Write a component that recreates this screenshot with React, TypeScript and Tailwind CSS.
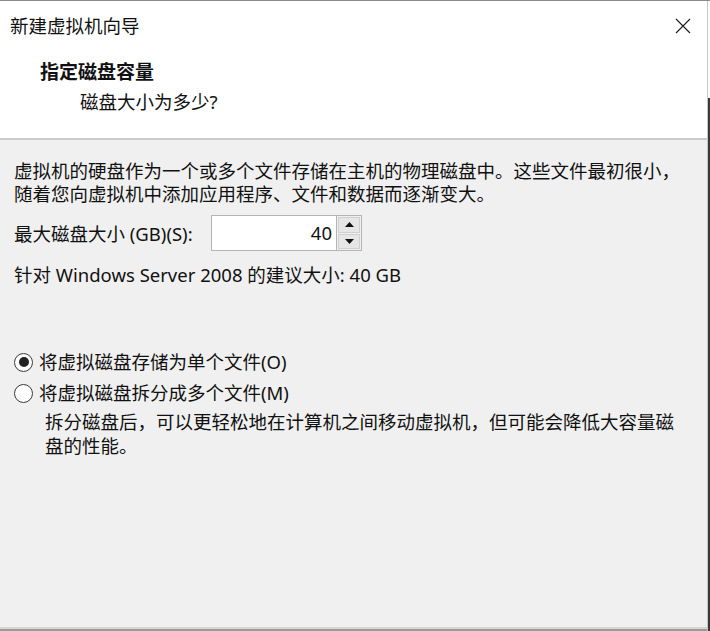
import React from 'react';

const font = { fontFamily: '"Segoe UI", "Noto Sans", "Noto Sans CJK SC", sans-serif' };

const CloseIcon = () => (
  <svg width="16" height="16" viewBox="0 0 16 16" className="block">
    <path d="M1 1 L15 15 M15 1 L1 15" stroke="#1a1a1a" strokeWidth="1.1" fill="none" />
  </svg>
);

const Radio: React.FC<{ checked?: boolean }> = ({ checked }) => (
  <span className="flex h-[19px] w-[19px] shrink-0 items-center justify-center rounded-full border-[1.5px] border-[#3a3a3a] bg-white">
    {checked && <span className="h-[10px] w-[10px] rounded-full bg-[#222]" />}
  </span>
);

const Spinner = () => (
  <div className="flex h-[36px] w-[25px] flex-col border border-l-0 border-[#b4b4b4] bg-[#f0f0f0] p-[1px]">
    <button className="flex flex-1 items-center justify-center border border-[#cfcfcf] bg-[#e6e6e6]">
      <svg width="9" height="5" viewBox="0 0 9 5">
        <path d="M0 5 L4.5 0 L9 5 Z" fill="#111" />
      </svg>
    </button>
    <button className="mt-[1px] flex flex-1 items-center justify-center border border-[#cfcfcf] bg-[#e6e6e6]">
      <svg width="9" height="5" viewBox="0 0 9 5">
        <path d="M0 0 L9 0 L4.5 5 Z" fill="#111" />
      </svg>
    </button>
  </div>
);

export default function App() {
  return (
    <div
      className="relative flex h-[631px] w-[710px] flex-col overflow-hidden border-t border-[#8a8a8a] bg-white text-[18.5px] text-[#111]"
      style={font}
    >
      {/* header */}
      <div className="flex h-[50px] items-center justify-between pl-[10px] pr-[19px]">
        <span className="leading-[22px]">新建虚拟机向导</span>
        <CloseIcon />
      </div>
      <div className="mt-[9px] pl-[40px] text-[19px] font-bold leading-[24px]">指定磁盘容量</div>
      <div className="mt-[6px] pl-[80px] leading-[24px]">磁盘大小为多少?</div>
      <div className="mt-[24px] h-[2px] bg-[#cacaca]" />

      {/* body */}
      <div className="flex flex-1 flex-col bg-[#f0f0f0] px-[14px] pt-[19px]">
        <p className="whitespace-nowrap leading-[23px]">
          虚拟机的硬盘作为一个或多个文件存储在主机的物理磁盘中。这些文件最初很小，
          <br />
          随着您向虚拟机中添加应用程序、文件和数据而逐渐变大。
        </p>

        <div className="mt-[10px] flex h-[36px] items-center">
          <span className="w-[197px] whitespace-nowrap leading-[21px]">最大磁盘大小 (GB)(S):</span>
          <div className="flex h-[36px] w-[126px] items-center justify-end border border-[#b4b4b4] bg-white pr-[4px]">
            40
          </div>
          <Spinner />
        </div>

        <div className="mt-[13px] whitespace-nowrap leading-[21px]">
          针对 Windows Server 2008 的建议大小: 40 GB
        </div>

        <div className="mt-[65px] flex h-[24px] items-center gap-[6px]">
          <Radio checked />
          <span className="whitespace-nowrap">将虚拟磁盘存储为单个文件(O)</span>
        </div>
        <div className="mt-[7px] flex h-[24px] items-center gap-[6px]">
          <Radio />
          <span className="whitespace-nowrap">将虚拟磁盘拆分成多个文件(M)</span>
        </div>
        <p className="mt-[5px] whitespace-nowrap pl-[31px] leading-[24px]">
          拆分磁盘后，可以更轻松地在计算机之间移动虚拟机，但可能会降低大容量磁
          <br />
          盘的性能。
        </p>
      </div>

      <div className="h-[2px] bg-[#d6d6d6]" />
      <div className="h-[2px] bg-[#9a9a9a]" />

      {/* window edge on the right */}
      <div className="absolute right-[2px] top-0 bottom-0 w-[1px] bg-[#c6c6c6]" />
      <div className="absolute right-0 top-[97px] bottom-0 w-[2px] bg-[#3a3a3a]" />
    </div>
  );
}
